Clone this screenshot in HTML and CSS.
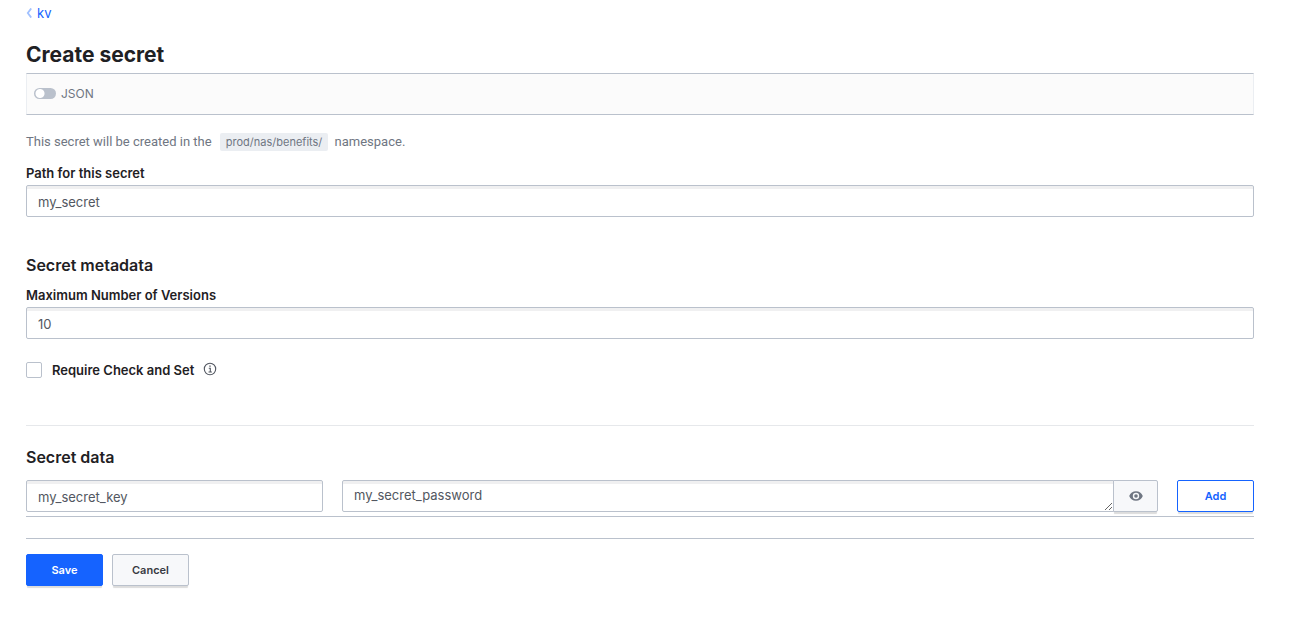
FILE: index.html
```html
<!DOCTYPE html>
<html lang="en">
<head>
<meta charset="utf-8">
<title>Create secret</title>
<link rel="stylesheet" href="styles.css">
</head>
<body>
<main class="page">
  <nav class="breadcrumb">
    <a href="#kv"><svg class="chevron" viewBox="0 0 6 10" aria-hidden="true"><path d="M5.200.4 1.800 5l3.400 4.600"/></svg>kv</a>
  </nav>
  <h1 class="title">Create secret</h1>
  <form class="form">
    <div class="toolbar">
      <input class="switch" type="checkbox" role="switch" id="json">
      <label class="switch-label" for="json">JSON</label>
    </div>
    <p class="hint">This secret will be created in the <code class="tag">prod/nas/benefits/</code> namespace.</p>
    <div class="field">
      <label class="label" for="path">Path for this secret</label>
      <input class="input" type="text" id="path" value="my_secret">
    </div>
    <section class="metadata">
      <h2 class="heading">Secret metadata</h2>
      <div class="field">
        <label class="label" for="versions">Maximum Number of Versions</label>
        <input class="input" type="text" id="versions" value="10">
      </div>
      <div class="check-row">
        <input class="checkbox" type="checkbox" id="cas">
        <label class="label" for="cas">Require Check and Set</label>
        <svg class="info" viewBox="0 0 14 14" aria-hidden="true"><circle cx="7" cy="7" r="5.7"/><path d="M5.8 6.2h1.500v3.600M5.500 10h3.400"/><path class="dot" d="M6.300 3.400h1.400v1.400H6.300z"/></svg>
      </div>
    </section>
    <section class="data">
      <h2 class="heading">Secret data</h2>
      <div class="data-row">
        <input class="input key" type="text" aria-label="Key" value="my_secret_key">
        <div class="value">
          <textarea class="input area" aria-label="Value" rows="1">my_secret_password</textarea>
          <button class="button reveal" type="button" aria-label="Show value"><svg class="eye" viewBox="0 0 14 10" aria-hidden="true"><path fill-rule="evenodd" d="M7 .2C3.900.2 1.300 2.100.2 5c1.100 2.900 3.700 4.800 6.800 4.800s5.700-1.900 6.800-4.800C12.700 2.100 10.100.2 7 .2Zm0 8a3.200 3.200 0 1 1 0-6.400 3.200 3.200 0 0 1 0 6.400Z"/><circle cx="7" cy="5" r="1.800"/></svg></button>
        </div>
        <button class="button add" type="button">Add</button>
      </div>
    </section>
    <div class="actions">
      <button class="button save" type="submit">Save</button>
      <button class="button" type="button">Cancel</button>
    </div>
  </form>
</main>
</body>
</html>
```
FILE: styles.css
```css
* { box-sizing: border-box; }
body {
  margin: 0;
  background: #fff;
  color: #1f2124;
  font: 13px/20px Inter, "Liberation Sans", sans-serif;
}
.page { padding: 3px 44px 32px 26px; }
.breadcrumb a {
  display: inline-flex;
  align-items: center;
  gap: 5px;
  color: #1563ff;
  text-decoration: none;
}
.chevron { width: 6px; height: 10px; fill: none; stroke: #a2c1ff; stroke-width: 1.8; }
.title { margin: 18px 0 4px; font-size: 21px; line-height: 28px; font-weight: 700; }
.toolbar {
  display: flex;
  align-items: center;
  gap: 5px;
  height: 42px;
  padding: 0 7px 1px;
  background: #fbfbfb;
  border: 1px solid #bac1cc;
  border-left-color: #ebeef2;
  border-right-color: #ebeef2;
  color: #6f7682;
}
.switch {
  appearance: none;
  width: 22px;
  height: 11px;
  margin: 0;
  border-radius: 6px;
  background: radial-gradient(circle at 6px 50%, #fff 4px, transparent 5px) #bac1cc;
}
.switch-label { font-size: 12px; }
.hint { margin: 17px 0 11px; color: #6f7682; font-family: Roboto, "Liberation Sans", sans-serif; }
.tag {
  margin: 0 3px 0 5px;
  padding: 2px 6px;
  border-radius: 2px;
  background: #ebeef2;
  font: 11px/14px Inter, "Liberation Sans", sans-serif;
}
.field { display: flex; flex-direction: column; gap: 2px; }
.label { font-weight: 600; }
.input {
  width: 100%;
  height: 32px;
  margin: 0;
  padding: 2px 11px 0;
  border: 1px solid #bac1cc;
  border-radius: 2px;
  background: #fff;
  box-shadow: inset 0 4px 0 -1px #f0f0f1;
  color: #525761;
  font: inherit;
  outline: 0;
}
.metadata { margin-top: 38px; padding-bottom: 45px; border-bottom: 1px solid #e6e8eb; }
.heading { margin: 0; font-size: 16px; line-height: 20px; font-weight: 600; }
.metadata .field { margin-top: 10px; }
.check-row { display: flex; align-items: center; margin-top: 21px; }
.checkbox {
  appearance: none;
  width: 16px;
  height: 16px;
  margin: 0 10px 0 0;
  border: 1px solid #bac1cc;
  border-radius: 2px;
  background: #fff;
}
.info { width: 14px; height: 14px; margin: 0 0 3px 9px; fill: none; stroke: #525761; stroke-width: 1.1; }
.info .dot { fill: #525761; stroke: none; }
.data { padding: 21px 0 4px; border-bottom: 1px solid #bac1cc; }
.data-row { display: grid; grid-template-columns: 297fr 816fr 77px; gap: 19px; margin-top: 13px; }
.value { display: flex; }
.area { flex: 1; min-width: 0; padding: 4px 11px; border-radius: 2px 0 0 2px; resize: vertical; }
.button {
  min-width: 77px;
  height: 32px;
  padding: 0 16px;
  border: 1px solid #bac1cc;
  border-radius: 2px;
  background: #f7f8fa;
  box-shadow: 0 3px 1px -1px #dcdcdc;
  color: #373a42;
  font: 600 11px/16px Inter, "Liberation Sans", sans-serif;
}
.reveal { display: grid; place-items: center; min-width: 45px; padding: 0; margin-left: -1px; border-radius: 0 2px 2px 0; }
.eye { width: 14px; height: 10px; fill: #6f7682; }
.add { border-color: #1563ff; background: #fff; color: #1563ff; }
.actions { display: flex; gap: 9px; margin-top: 21px; padding-top: 15px; border-top: 1px solid #bac1cc; }
.save { border-color: #1563ff; background: #1563ff; color: #fff; }
```
